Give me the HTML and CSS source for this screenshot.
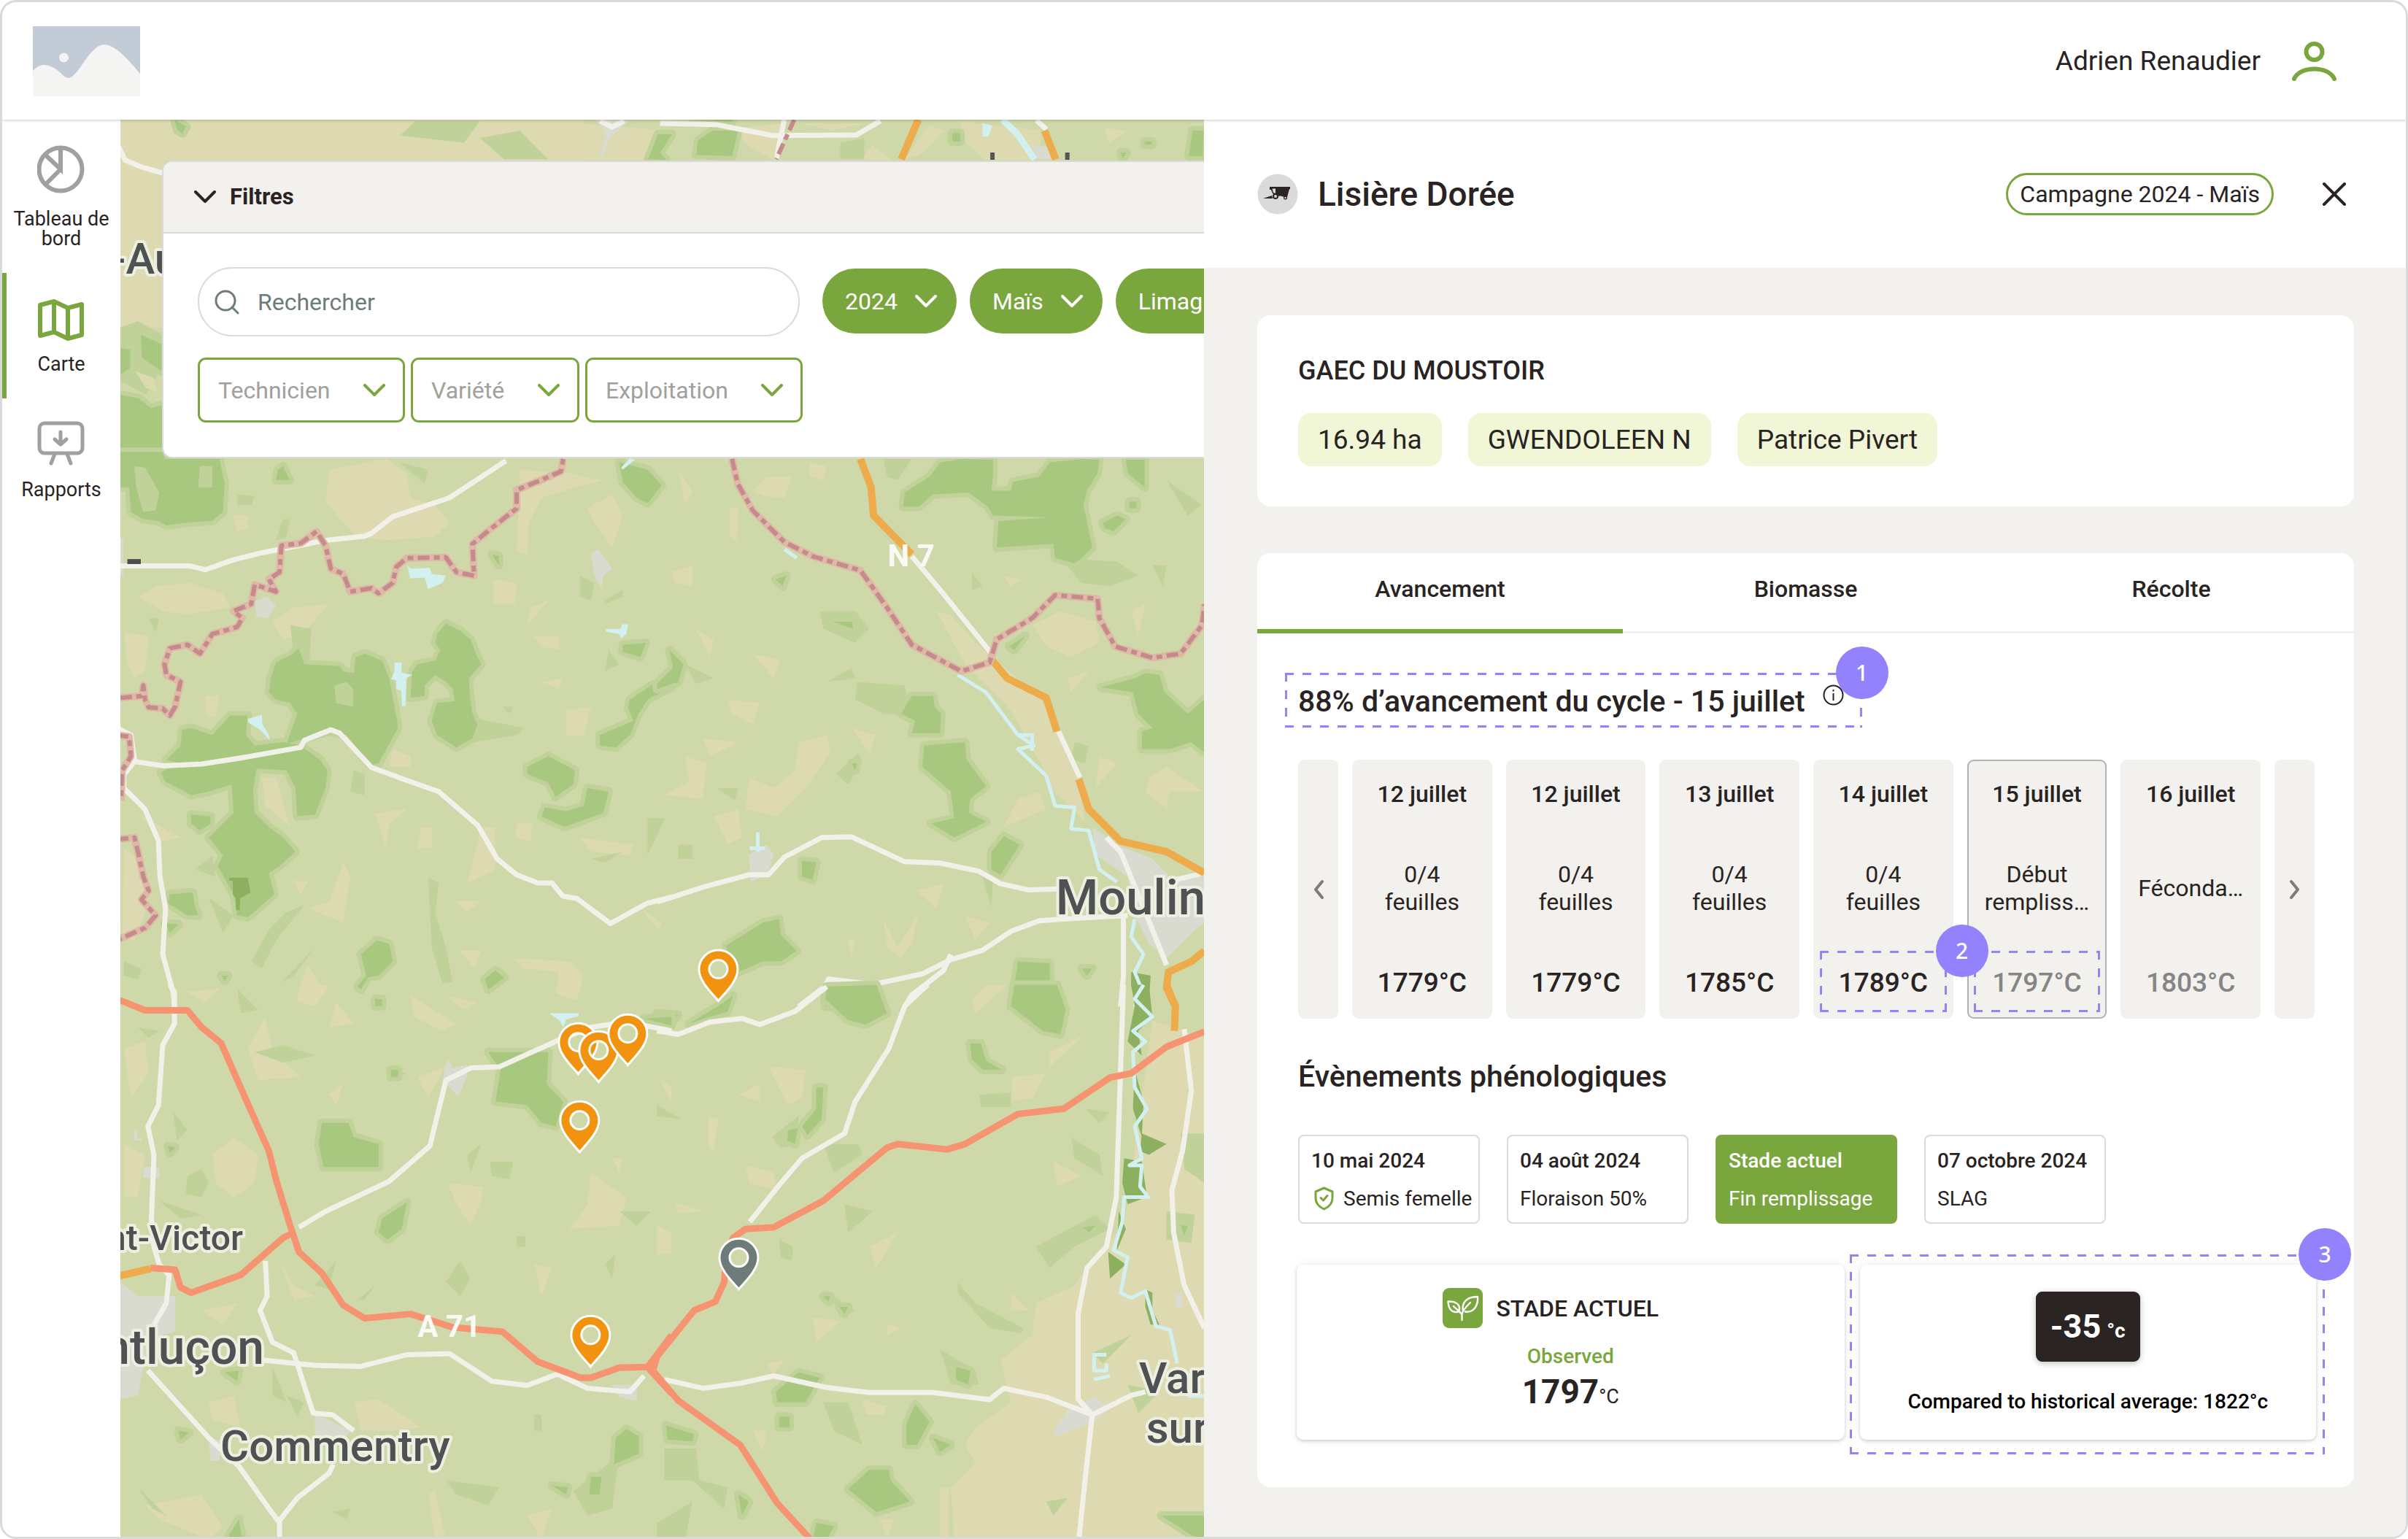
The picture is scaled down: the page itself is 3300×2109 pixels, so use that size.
FILE: index.html
```html
<!DOCTYPE html>
<html lang="fr">
<head>
<meta charset="utf-8">
<title>Carte des parcelles</title>
<link rel="stylesheet" href="styles.css">
</head>
<body>
<div class="app">
  <header class="topbar">
    <svg class="logo" viewBox="0 0 147 96" role="img" aria-label="Logo">
      <rect width="147" height="96" fill="#c3cbd6"/>
      <path fill="#f4f4f2" d="M0 61C8 53 14 52 22 54C34 58 38 65 45 70C52 73 57 67 66 55C78 37 88 25 98 25C114 26 131 46 147 65V96H0Z"/>
      <ellipse cx="42.500" cy="43" rx="6.500" ry="6.500" fill="#f4f4f2"/>
    </svg>
    <div class="user">
      <span>Adrien Renaudier</span>
      <svg width="61" height="54" viewBox="0 0 61 54" fill="none" stroke="#7aa63e" aria-hidden="true">
        <circle cx="30.500" cy="14" r="11" stroke-width="6"/>
        <path d="M3 51C7 42 18 37.500 30.500 37.500S54 42 58 51" stroke-width="6" stroke-linecap="round"/>
      </svg>
    </div>
  </header>

  <div class="layout">
    <nav class="sidebar">
      <a class="nav-item" href="#">
        <svg width="66" height="72" viewBox="0 0 66 72" fill="none" stroke="#a0a09e" stroke-width="6" aria-hidden="true">
          <circle cx="32" cy="33" r="29.500"/><path d="M32 4V33L12 14M32 33L12 53"/>
        </svg>
        <span>Tableau de bord</span>
      </a>
      <a class="nav-item active" href="#">
        <svg width="66" height="72" viewBox="0 0 66 72" fill="none" stroke="#7aa63e" stroke-width="6" stroke-linejoin="round" aria-hidden="true">
          <path d="M4 20L23 15L42 24L61 19V61L42 66L23 57L4 62ZM23 15V57M42 24V66"/>
        </svg>
        <span>Carte</span>
      </a>
      <a class="nav-item" href="#">
        <svg width="66" height="72" viewBox="0 0 66 72" fill="none" stroke="#a0a09e" stroke-width="5" stroke-linecap="round" stroke-linejoin="round" aria-hidden="true">
          <rect x="3" y="10" width="59" height="41" rx="7"/><path d="M32 22V39M24 32L32 39L40 32M24 52L19 65M41 52L46 65"/>
        </svg>
        <span>Rapports</span>
      </a>
    </nav>

    <main class="map">
      <svg class="map-canvas" viewBox="165 165 1485 1941" preserveAspectRatio="xMinYMin slice" aria-label="Carte">
        <defs>
          <symbol id="pin" viewBox="-30 -74 60 78" overflow="visible">
            <path fill-rule="evenodd" stroke="#fff" stroke-width="3" d="M0 0C-6 -8 -26.500 -26 -26.500 -43A26.500 26.500 0 0 1 26.500 -43C26.500 -26 6 -8 0 0ZM0 -56A12.500 12.500 0 0 0 0 -31A12.500 12.500 0 0 0 0 -56Z"/>
          </symbol>
          <path id="limit-west" d="M10 695L70 690L75 660L80 700L90 722L130 725L150 745L165 720L180 650L140 630L135 600L150 555L200 545L235 570L270 515L340 495L355 470L330 450L380 430L390 375L450 395L430 360L460 340L465 265L520 258L565 225L590 265L605 330L640 345L660 395L720 385L740 400L780 370L790 325L820 300L930 298L960 340L1010 350L1005 260L1060 215L1130 160L1130 108L1210 75L1255 55L1262 20M0 1095L50 1090L60 1130L75 1200L90 1240L70 1265L110 1310L80 1345L0 1380M0 800L35 805L40 860L15 900L12 985"/>
          <path id="limit-east" d="M212 20L228 90L270 165L360 255L440 295L575 335L650 440L720 545L860 620L940 595L960 530L1060 470L1125 405L1245 415L1250 470L1295 550L1400 582L1480 570L1540 490L1547 430"/>
        </defs>
        <rect x="165" y="165" width="1485" height="1941" fill="#cfd8a9"/>
        <rect x="165" y="165" width="635" height="56" fill="#ddd9b0"/>
        <rect x="165" y="165" width="60" height="285" fill="#ddd9b0"/>

        <!-- Top band -->
        <g transform="translate(800 160) scale(.5485 .3333)">
          <path class="tan" d="M0 30L200 60L150 180L0 180ZM940 20L1140 60L1140 180L1000 180L950 100ZM380 50L500 30L470 180L400 110ZM540 30L700 30L620 60ZM720 120L770 180L690 180ZM1300 50L1360 60L1310 110ZM860 40L900 60L840 160L800 178Z"/>
          <path class="light" d="M-420 20L-260 20L-300 110L-460 80ZM-260 90L-160 60L-90 178L-200 178ZM640 110L700 90L700 178L640 178Z"/>
          <path class="forest" d="M320 60L385 60L370 165L280 160L285 100ZM185 75L220 75L190 150L205 180L160 178ZM920 70L940 70L940 105L920 105ZM1520 60L1547 60L1545 165L1510 165ZM270 15L370 15L370 24ZM1340 150L1355 150L1345 178ZM1400 105H1418V118H1400Z"/>
          <path class="urban" d="M30 15L110 20L60 100L50 165L40 160L55 70ZM1120 120L1170 130L1180 178H1130Z"/>
          <path class="water" d="M995 30L1020 40L1010 85H995Z"/>
          <path class="river wide" d="M1045 15L1080 70L1125 178"/>
          <path class="road" d="M40 20L70 45L100 20M190 30L330 35L470 80L680 78L740 20M1130 18L1155 55M480 178L500 15"/>
          <path class="border" d="M525 15L480 178"/>
          <path class="orange" d="M835 15L792 178M1150 60L1178 178"/>
          <path class="label-stub" d="M1020 150V180M1207 150V180"/>
        </g>

        <!-- Left strip -->
        <g transform="scale(.3571 .4591)">
          <path class="light" d="M462 980L530 960L622 1000L622 1100L560 1180L462 1140Z"/>
          <path class="forest" d="M540 1000L620 1030L620 1110L545 1070ZM462 1180L530 1190L580 1220L622 1210L622 1400L462 1400ZM462 1040L500 1045L500 1100L462 1120ZM670 360L715 380L700 400L680 390Z"/>
          <path class="tan" d="M520 1110L590 1130L600 1170L560 1160Z"/>
          <path class="road" d="M455 440L480 480L540 500L640 522"/>
        </g>

        <!-- North-west -->
        <g transform="translate(160 620) scale(.4847)">
          <path class="tan" d="M600 50L760 20L820 60L830 130L900 150L940 200L900 240L760 250L680 240L640 200L590 140ZM60 410L110 380L210 370L300 400L320 440L200 460L130 450ZM440 480L500 440L600 430L520 520L470 530ZM20 510L90 520L80 620L50 640L30 600ZM1140 50L1280 60L1370 80L1300 100L1200 130L1165 200L1160 290L1130 280ZM1330 160L1400 120L1430 180L1400 270L1350 200ZM1065 360L1130 370L1125 430L1065 430ZM1180 520L1250 520L1250 560L1200 550ZM780 840L830 860L830 890L770 890ZM1030 1060L1070 1060L1070 1180L990 1220L1000 1180ZM1130 1050L1175 1050L1170 1100L1125 1090ZM1310 1090L1460 1110L1450 1140L1340 1130ZM730 1020L820 1010L770 1050L760 1120ZM540 1290L600 1270L640 1160L660 1200L640 1330ZM970 1410L1030 1410L1010 1460ZM1120 1430L1280 1440L1320 1480L1300 1550L1240 1530L1250 1470L1150 1460ZM20 1120L60 1150L90 1280L50 1380L15 1370ZM1270 730L1340 720L1320 800L1270 800ZM60 1020L180 1090L130 1100ZM510 1530L540 1450L570 1500L600 1510L560 1568L510 1550ZM330 180L370 180L370 220L340 225ZM250 690L290 690L280 750L250 740ZM1200 650L1260 640L1250 670ZM1170 440L1220 420L1160 490ZM860 1060L890 1060L890 1120L850 1120ZM960 1270L1030 1270L990 1300ZM500 1210L540 1215L520 1250ZM1480 1290L1540 1330L1530 1350Z"/>
          <path class="light" d="M470 190L490 190L480 240L450 250ZM880 1200L910 1220L900 1300L930 1400L950 1500L920 1500L890 1400ZM430 1350L480 1300L530 1280L450 1380L410 1460L380 1440ZM1390 560L1420 600L1380 620ZM465 1500L560 1400L500 1480ZM340 120L390 125L380 150L340 150ZM490 490L550 500L545 590L500 570ZM90 470L120 470L110 510ZM1500 1035L1550 1035L1500 1140ZM1310 350L1350 370L1340 420L1310 410ZM1380 420L1430 390L1430 410L1380 430ZM800 30L880 50L870 90ZM1340 1150L1430 1130L1380 1160ZM1090 720L1120 720L1110 740ZM220 1180L270 1140L280 1200ZM260 1260L330 1310L300 1360ZM20 1440L70 1460L60 1490L20 1480ZM670 900L700 910L700 970L660 960ZM1000 750L1150 780L1130 800L1010 820Z"/>
          <path class="forest" d="M10 0L130 0L135 20L290 20L305 90L300 170L270 195L200 200L140 208L115 195L75 190L40 170L35 100L10 100ZM515 555L530 600L630 605L640 620L670 625L675 580L700 570L750 590L770 640L785 720L795 780L740 880L715 885L650 800L600 790L480 825L510 740L490 710L450 700L430 680L435 640L450 595L490 575ZM905 515L930 485L970 505L1000 530L1015 570L1030 600L995 640L998 690L1005 740L1020 770L1005 810L960 835L905 800L890 760L905 710L955 705L950 670L930 650L900 630L870 660L870 690L830 695L835 620L850 600L900 590L915 560L900 540ZM185 785L210 780L270 800L320 745L370 745L365 800L390 830L470 820L520 830L575 870L595 900L590 950L560 1025L510 1030L505 950L480 900L395 895L385 960L390 1020L430 1060L470 1090L505 1130L460 1170L430 1190L445 1250L400 1290L370 1315L340 1310L330 1250L285 1170L300 1140L260 1090L330 1020L325 940L260 960L210 970L135 930L125 905L180 880L140 870L180 830ZM455 50L470 40L488 80L450 80ZM210 1025L265 1030L265 1050L235 1070L210 1050ZM150 1250L215 1245L220 1280L230 1310L200 1310L145 1275ZM690 1420L735 1380L770 1390L780 1440L740 1480L710 1485L690 1520L680 1510L705 1480ZM1420 30L1500 50L1540 95L1500 145L1470 130L1430 85ZM1430 545L1495 540L1480 580L1430 565ZM1568 640L1510 660L1450 700L1445 725L1460 760L1365 800L1365 830L1410 835L1450 800L1475 740L1500 700L1568 665ZM1160 890L1220 860L1295 900L1290 940L1240 975L1220 935L1160 910ZM1330 950L1390 960L1375 1020L1265 1060L1200 1030L1210 1005L1270 1015L1320 1000ZM1060 290L1080 295L1080 320ZM1040 1490L1070 1465L1095 1485L1050 1520ZM135 1330L175 1335L150 1360ZM295 1480L315 1480L305 1495Z"/>
          <path class="light" d="M50 40L80 45L120 115L110 165L75 170L55 100ZM235 40L270 40L270 100L230 100ZM615 660L650 650L668 670L668 720L620 710Z"/>
          <path class="tan" d="M410 920L450 920L490 1060L420 1000Z"/>
          <path class="dark" d="M318 1203H370L378 1245L348 1262V1295H337V1262L328 1250V1212H318Z"/>
          <path class="urban" d="M390 420L425 410L450 435L425 470L395 465ZM1340 290L1360 275L1400 330L1375 350L1370 385L1350 350ZM10 245H18V350H10Z"/>
          <path class="water" d="M820 320L830 330L885 328L890 345L930 350L920 370L880 388L870 355L830 358ZM785 595H805V625L835 630L818 640L816 718H806L804 675L790 670V645L775 643L785 620ZM370 755L410 743L412 770L430 800L432 815L405 785L372 765ZM1382 500L1425 500L1428 487H1445L1440 515L1425 527L1420 515L1382 508ZM1425 45L1450 18L1465 22L1430 50Z"/>
          <path class="road" d="M10 322L205 322L250 333L330 305L410 285L590 250L700 238L720 230L780 183L940 130L1100 25M0 780L40 800L50 870L20 910L20 950L80 1010L118 1100L122 1200L138 1290L130 1420L160 1530L163 1568M10 925L50 875L130 887L240 882L350 865L520 835L530 815L605 785L630 795L720 892L830 932L910 960L1020 1055L1075 1150L1130 1195L1190 1218L1230 1218L1260 1255L1300 1262L1395 1333L1500 1275L1568 1258"/>
          <use href="#limit-west" class="border-bed"/>
          <use href="#limit-west" class="border"/>
          <path d="M30 303H68V317H30Z" fill="#4c4c4c"/>
        </g>

        <!-- North-east -->
        <g transform="translate(900 620) scale(.4847)">
          <path class="tan" d="M270 110L310 70L380 70L360 130L300 125ZM430 30L480 40L470 80L430 70ZM40 340L100 320L100 380L50 370ZM1060 490L1140 450L1240 480L1250 540L1170 580L1100 550ZM1340 450L1380 430L1360 520ZM790 450L830 460L900 540L1080 690L1180 870L1210 1050L1180 1010L1120 960L1090 890L1000 730L870 600ZM200 700L290 710L270 770L210 740ZM400 820L480 800L490 850L420 950L340 1030L250 1010L260 920L330 950L390 900ZM80 860L140 880L130 980L20 970L90 930ZM160 1030L230 1010L240 1090L200 1110ZM1390 920L1440 890L1547 960L1450 960L1440 1010L1380 960ZM640 1320L680 1400L740 1300L720 1390L690 1430L650 1400ZM870 1310L940 1330L900 1380ZM205 160L230 160L225 250L205 240ZM980 350L1030 360L1000 380ZM110 500L160 530L150 580ZM270 570L350 590L330 640ZM130 810L230 820L150 860ZM1160 640L1220 620L1170 680ZM1020 980L1080 960L1100 1010L980 1060ZM550 780L620 800L600 850ZM1250 860L1300 880L1240 950ZM730 1240L810 1220L790 1290ZM540 1380L560 1380L550 1430ZM60 50L100 110L80 150Z"/>
          <path class="light" d="M565 650L700 660L720 750L640 740L560 700ZM460 450L560 450L600 500L560 540L470 500ZM505 910L570 850L580 880L540 940ZM170 950L230 950L220 985ZM640 20L720 20L680 80L650 70ZM890 340L920 380L890 390ZM1140 300L1300 310L1360 350L1280 380L1200 370ZM1400 320L1440 320L1430 380ZM1180 820L1220 830L1210 880L1170 870ZM480 650L550 610L560 640ZM80 600L160 640L110 655ZM60 1110H100V1150H60ZM920 1200L950 1200L945 1290ZM1440 80L1540 150L1500 180Z"/>
          <path class="forest" d="M800 30L860 20L950 22L950 60L945 110L1000 110L1005 85L1080 70L1110 30L1200 20L1250 22L1245 60L1215 110L1205 150L1230 270L1200 300L1180 315L1125 300L1120 260L960 270L965 195L1110 185L950 180L935 155L880 115L780 120L740 155L695 155L700 115L770 70ZM1325 22L1378 22L1378 100L1330 60ZM1260 200L1300 180L1325 190L1290 225L1265 215ZM1255 665L1350 640L1380 625L1420 630L1435 680L1500 740L1547 700L1547 850L1510 820L1450 840L1370 840L1370 790L1400 780L1360 740L1345 680ZM720 690L780 690L785 720L803 740L800 795L720 795L730 760L690 740ZM755 830L870 820L875 870L930 945L885 980L880 1020L930 1045L840 1090L775 1050L840 1035L830 960L750 890ZM945 1130L980 1085L1025 1110L1000 1150L970 1195L945 1180ZM195 1395L300 1330L345 1320L350 1365L395 1410L350 1440L300 1440L230 1470L200 1420ZM410 1155L450 1160L440 1210L410 1200ZM475 1530L500 1500L620 1520L625 1568L475 1568ZM1020 1440L1110 1445L1110 1568L1000 1568ZM35 560L75 600L60 650L0 670L0 655L45 610ZM335 360L365 350L355 380ZM495 480L550 480L555 500ZM550 880L565 880L560 900ZM1200 1460H1230L1215 1480ZM995 550L1040 520L1010 560ZM1335 140H1355V160H1335Z"/>
          <path class="dark" d="M1340 1470L1395 1480L1390 1560L1370 1560L1340 1510Z"/>
          <path class="urban" d="M1230 1060L1300 1110L1400 1150L1450 1200L1547 1200L1547 1330L1500 1370L1440 1430L1390 1390L1350 1310L1330 1200L1240 1140ZM260 1140L310 1110L330 1140L310 1195L265 1215Z"/>
          <path class="river" d="M850 630L930 680L1020 800L1065 830L1020 840L1100 915L1125 1000L1180 1005L1170 1065L1220 1070L1250 1180L1300 1215M1350 1320L1340 1370L1375 1420L1350 1470L1370 1520L1350 1568M285 1075V1130M262 1120H305M360 275L395 300M1020 800L1060 800L1060 845"/>
          <path class="road" d="M0 1272L130 1230L260 1195L315 1195L360 1145L465 1090L550 1088L700 1158L800 1162L910 1185L970 1220L1050 1238L1130 1235M400 1568L475 1510L485 1490L610 1505L750 1475L830 1435L920 1408L1000 1355L1080 1325L1180 1318L1330 1310M700 1568L720 1535L810 1465L830 1420M1318 1310L1318 1480L1310 1568M720 295L800 390L945 570M1135 790L1195 920M1270 1090L1310 1130L1380 1300L1440 1450M1440 1215L1547 1190"/>
          <path class="orange" d="M575 20L605 100L612 180L720 290M948 590L990 640L1100 695L1130 790M1192 925L1220 1010L1310 1100L1440 1130L1547 1190M1547 1410L1510 1440L1445 1470L1440 1515L1465 1568"/>
          <use href="#limit-east" class="border-bed"/>
          <use href="#limit-east" class="border"/>
        </g>

        <!-- South-east -->
        <g transform="translate(900 1350) scale(.4847)">
          <path class="tan" d="M1070 900L1180 850L1230 770L1320 680L1400 100L1547 150L1547 1568L840 1568L830 1420L900 1350L870 1300L900 1250L1000 1180L970 1060L1060 990ZM315 230L420 240L410 320L370 340ZM1005 260L1100 250L1060 320L1000 330ZM1120 500L1200 540L1130 570ZM600 740L680 700L620 800ZM440 940L520 950L450 1010ZM230 310L290 280L290 330ZM145 370L175 380L160 470L145 460ZM250 510L330 530L340 580L260 560ZM0 680L40 700L40 760L0 760ZM50 615L130 640L60 645ZM580 1170L650 1190L640 1215L590 1215ZM650 960L690 970L650 990ZM1000 870L1050 920L1000 920ZM270 1260L310 1260L300 1320ZM630 1510L670 1510L650 1568ZM800 1420H825V1568H800ZM890 40L930 0L990 0L900 80ZM1110 190L1210 140L1110 230ZM310 1070L360 1060L330 1100Z"/>
          <path class="light" d="M850 840L900 900L1035 970L1030 985L940 970L850 870ZM910 310L1000 305L1000 345L915 345ZM1170 430L1250 480L1260 540L1180 490ZM530 620L610 640L540 700ZM1070 740L1240 650L1280 690L1180 740L1110 800ZM800 1030L900 1090L910 1130L830 1130ZM1330 1130L1420 1150L1360 1210ZM345 720L385 740L380 780L350 770ZM325 430L400 370L400 450L350 460ZM470 450L570 450L580 480L500 530ZM20 1310L110 1310L120 1400L200 1420L190 1480L100 1400L20 1400ZM470 1180L540 1180L580 1300L500 1260ZM1440 640L1520 650L1510 730L1440 720ZM1230 1040L1340 990L1260 1070ZM0 340L70 380L0 370ZM0 1520L100 1460L80 1568L0 1568ZM1100 1460L1160 1450L1120 1500ZM470 860L560 920L530 940ZM1210 350L1280 360L1250 390ZM1480 420L1547 420L1547 560L1490 520Z"/>
          <path class="forest" d="M475 40L480 5L620 0L650 80L590 112L540 100ZM1010 0L1130 0L1155 70L1140 140L1090 130L1000 60ZM885 165L915 165L930 215L975 240L920 240L890 210ZM0 80L60 85L30 120L0 115ZM90 110L180 55L215 30L200 75L120 100ZM600 1370L655 1370L660 1400L715 1460L620 1490L540 1425ZM705 1240L730 1185L770 1235L735 1300L705 1300ZM335 1150L400 1095L460 1110L420 1180L340 1180ZM25 1245L105 1270L100 1290L30 1285ZM1425 1500L1547 1500L1547 1568L1510 1555ZM845 1080L885 1090L880 1130L845 1115ZM230 1440L260 1460L240 1500ZM370 410L398 405L390 450L368 440ZM450 290L470 290L465 380L425 425L410 400L450 350ZM780 1280L830 1300L800 1320ZM1205 685L1240 680L1220 700ZM470 880L490 880L485 895ZM515 910L540 910L530 930ZM450 1520L500 1530L480 1568L440 1568ZM345 1220H375V1250H345ZM1480 680L1500 680L1490 710Z"/>
          <path class="dark" d="M1340 0L1390 0L1400 90L1360 130L1370 200L1330 160L1350 60ZM1350 240L1375 330L1370 430L1345 350ZM1370 420L1440 450L1390 480L1365 470ZM1320 490L1370 500L1385 600L1330 620L1315 560ZM1305 640L1325 690L1300 750ZM1275 755L1325 790L1280 830ZM1380 860L1400 870V920L1420 960L1395 960L1380 910Z"/>
          <path class="urban" d="M1120 1260L1170 1190L1240 1165L1280 1200L1220 1240L1130 1275ZM1465 870H1485V910H1465Z"/>
          <path class="river" d="M1375 0L1350 40L1400 90L1345 130L1380 160L1345 190L1350 290L1385 350L1350 400L1370 490L1335 510L1370 510L1365 570L1388 600L1320 600L1315 670L1290 750L1330 770L1310 870L1340 885L1380 865L1410 965L1450 975L1470 1070M1230 1045H1270M1235 1045V1090H1270V1070M1235 1115L1280 1105M1500 1162H1547"/>
          <path class="road" d="M0 130L60 140L150 105L240 95L290 112L390 75L480 5M1318 0L1308 300L1298 600L1270 740L1215 800L1190 930L1190 1170L1230 1215L1215 1350L1192 1568M1490 125L1510 300L1485 470L1455 580L1460 700L1490 850L1547 970M765 0L700 60L655 180L560 330L530 420L410 490L350 560L262 670M20 1115L130 1140L240 1125L330 1105L480 1138L600 1152L780 1152L940 1172L980 1140L1100 1165L1230 1215L1340 1160L1380 1150"/>
          <path class="orange" d="M1440 0L1465 60L1462 130"/>
          <path class="red" d="M-10 1085L0 1050L105 920L165 895L190 840L195 760L215 715L250 690L330 685L470 610L650 460L680 450L820 465L870 450L1020 365L1150 350L1280 262L1340 250L1440 175L1547 132M-10 1092L60 1175L235 1300L340 1465L435 1568"/>
        </g>

        <!-- South-west -->
        <g transform="translate(160 1350) scale(.4847)">
          <path class="tan" d="M270 480L330 430L400 480L390 560L330 600L280 560ZM370 180L420 90L440 190L520 260L400 270ZM670 1180L740 1170L860 1250L780 1260L690 1260ZM80 1470L240 1440L300 1530L260 1568L120 1510ZM935 560L1035 570L1030 610L1000 680L960 620ZM1340 530L1440 600L1420 680L1280 690L1330 620ZM1180 790L1230 800L1200 880ZM460 780L500 850L560 880L500 890ZM200 20L290 10L250 50ZM850 260L930 230L880 320ZM600 310L640 280L620 340ZM20 180L80 160L90 250L40 320ZM20 450L80 480L60 600L20 600ZM260 1180L330 1160L350 1250L270 1230ZM880 1440L900 1430L930 1568L900 1568ZM1400 490L1430 490L1420 530ZM830 30L960 110L920 130L840 90ZM1160 1500L1230 1480L1200 1568ZM930 30L1020 50L980 70ZM240 920L340 900L300 960ZM1530 260L1568 290L1568 330ZM620 50L670 110L600 120Z"/>
          <path class="light" d="M200 540L240 520L260 560L240 600L195 590ZM160 360L200 410L170 440ZM930 840L970 780L1000 830L970 880ZM1055 500L1120 500L1110 550L1060 540ZM120 610L240 650L180 660ZM680 890L730 850L700 890ZM390 190L470 170L560 200L470 220ZM930 1400L1080 1420L1050 1470L960 1440ZM1180 1215H1200V1260H1180ZM60 120L120 130L90 150ZM340 10L400 70L350 80ZM60 1420L140 1500L100 1480ZM480 1160L530 1180L510 1220ZM1130 710H1155V740H1130ZM1380 790L1410 760L1400 830ZM440 1080L480 1180L440 1160ZM610 1490L660 1480L650 1510ZM760 230L820 250L780 270ZM990 480L1030 450L1000 530ZM1420 640L1510 640L1470 680ZM560 850L620 780L600 860ZM1290 1430L1420 1330L1400 1480L1330 1500Z"/>
          <path class="forest" d="M580 390L655 390L670 430L740 450L740 515L585 515L570 450ZM1050 190L1220 190L1215 280L1262 330L1240 400L1200 390L1160 340L1070 330L1085 240ZM750 660L820 615L805 690L765 720L740 700ZM1410 1280L1440 1255L1475 1275L1475 1325L1405 1355ZM1340 1390L1370 1390L1365 1440L1335 1440ZM310 1568L345 1510L355 1568ZM1230 1415L1275 1420L1270 1440ZM1490 95L1568 90L1568 115ZM145 455L165 460L150 475ZM175 1260L205 1265L180 1285ZM305 1095L345 1090L340 1120ZM730 40H750V60H730ZM775 240H795V260H775Z"/>
          <path class="urban" d="M10 840L60 880L165 880L165 980L90 1000L60 1160L10 1170ZM560 1210L660 1260L640 1290L560 1280ZM920 270L935 210L950 235L990 225V260L965 315ZM260 1280L300 1290L290 1345L265 1345ZM1400 1130H1470V1175L1420 1165ZM50 410H58V435H70V440H50ZM75 515H120V545H75Z"/>
          <path class="water" d="M1222 80H1305V88L1270 98L1262 120L1250 100Z"/>
          <path class="road" d="M150 0L163 20L163 110L130 170L118 340L88 400L105 480L98 660L105 740L120 790L148 820L140 900L105 960M88 1090L260 1280L345 1360L430 1480L460 1520L460 1568M455 1520L510 1450L600 1380L612 1355M515 685L590 640L770 555L885 455L930 270L1000 235L1080 232L1240 160L1340 120L1440 105L1568 130M420 780L425 880L405 920L440 1010L500 1040L555 1210L610 1215L670 1260M410 1060L560 1075L690 1078L820 1045L940 1042L1060 1120L1160 1132L1245 1100L1330 1140L1450 1150L1490 1105"/>
          <path class="red" d="M0 40L80 72L200 72L240 120L295 165L350 290L430 470L450 550L490 680L515 755L580 815L640 905L700 942L830 930L950 968L1090 980L1190 1065L1310 1110L1340 1110L1420 1082L1500 1080L1568 990M1500 1080L1568 1155M500 700L470 715L350 820L210 870L180 855L165 805L95 800"/>
          <path class="orange" d="M0 824L95 802"/>
        </g>

        <g class="place">
          <text x="152" y="376" font-size="60">-Au</text>
          <text x="1446" y="1253" font-size="67">Moulin</text>
          <text x="333" y="1713" font-size="48" text-anchor="end">nt-Victor</text>
          <text x="362" y="1869" font-size="66" text-anchor="end">ntluçon</text>
          <text x="302" y="2002" font-size="60">Commentry</text>
          <text x="1560" y="1909" font-size="60">Var</text>
          <text x="1570" y="1977" font-size="60">sur</text>
        </g>
        <g class="road-name">
          <text x="1216" y="777">N 7</text>
          <text x="572" y="1832">A 71</text>
        </g>

        <g fill="#f2930f">
          <use href="#pin" x="954" y="1298" width="60" height="78"/>
          <use href="#pin" x="762" y="1398" width="60" height="78"/>
          <use href="#pin" x="790" y="1409" width="60" height="78"/>
          <use href="#pin" x="830" y="1386" width="60" height="78"/>
          <use href="#pin" x="764" y="1505" width="60" height="78"/>
          <use href="#pin" x="779" y="1799" width="60" height="78"/>
        </g>
        <use href="#pin" x="982" y="1693" width="60" height="78" fill="#6d7b79"/>
      </svg>

      <section class="filters">
        <button class="filters-head" type="button">
          <svg class="chevron" viewBox="0 0 30 18"><path d="M2 2L15 15L28 2"/></svg>
          <span>Filtres</span>
        </button>
        <div class="filters-body">
          <div class="row">
            <label class="search">
              <svg width="34" height="34" viewBox="0 0 34 34" fill="none" stroke="#6d7b79" stroke-width="3" stroke-linecap="round" aria-hidden="true"><circle cx="15" cy="15" r="13"/><path d="M24 24L32 32"/></svg>
              <input type="text" placeholder="Rechercher" aria-label="Rechercher">
            </label>
            <div class="chips">
              <button class="chip" type="button">2024<svg class="chevron" viewBox="0 0 30 18"><path d="M2 2L15 15L28 2"/></svg></button>
              <button class="chip" type="button">Maïs<svg class="chevron" viewBox="0 0 30 18"><path d="M2 2L15 15L28 2"/></svg></button>
              <button class="chip" type="button">Limagne<svg class="chevron" viewBox="0 0 30 18"><path d="M2 2L15 15L28 2"/></svg></button>
            </div>
          </div>
          <div class="selects">
            <div class="select"><select aria-label="Technicien"><option>Technicien</option></select><svg class="chevron" viewBox="0 0 30 18"><path d="M2 2L15 15L28 2"/></svg></div>
            <div class="select"><select aria-label="Variété"><option>Variété</option></select><svg class="chevron" viewBox="0 0 30 18"><path d="M2 2L15 15L28 2"/></svg></div>
            <div class="select"><select aria-label="Exploitation"><option>Exploitation</option></select><svg class="chevron" viewBox="0 0 30 18"><path d="M2 2L15 15L28 2"/></svg></div>
          </div>
        </div>
      </section>
    </main>

    <aside class="detail">
      <header class="detail-head">
        <svg width="56" height="56" viewBox="0 0 56 56" aria-hidden="true">
          <circle cx="28" cy="28" r="27.500" fill="#dadada"/>
          <g fill="#2a2423"><path d="M17 18H45V21H44L41 32H37L32 30.500L26 31L21 27L19 22H17ZM8 34L20 30L21 34Z"/><circle cx="25" cy="31" r="4"/><circle cx="38.500" cy="33" r="2.500"/></g>
          <path d="M20.500 20.500H25V27L22 26Z" fill="#dadada"/>
          <circle cx="25" cy="31" r="2" fill="#dadada"/><circle cx="38.500" cy="33" r="1.200" fill="#dadada"/>
        </svg>
        <h1>Lisière Dorée</h1>
        <span class="campaign">Campagne 2024 - Maïs</span>
        <button class="close" type="button" aria-label="Fermer">
          <svg width="34" height="34" viewBox="0 0 34 34" stroke="#292323" stroke-width="4" stroke-linecap="round"><path d="M3 3L31 31M31 3L3 31"/></svg>
        </button>
      </header>

      <div class="detail-body">
        <section class="card farm">
          <h2>GAEC DU MOUSTOIR</h2>
          <div class="tags"><span>16.94 ha</span><span>GWENDOLEEN N</span><span>Patrice Pivert</span></div>
        </section>

        <section class="card">
          <div class="tabs" role="tablist">
            <button type="button" role="tab" aria-selected="true">Avancement</button>
            <button type="button" role="tab" aria-selected="false">Biomasse</button>
            <button type="button" role="tab" aria-selected="false">Récolte</button>
          </div>
          <div class="card-body">
            <div class="progress note">
              <h2>88% d’avancement du cycle - 15 juillet</h2>
              <svg width="29" height="29" viewBox="0 0 29 29" fill="none" stroke="#292323" stroke-width="2" aria-hidden="true"><circle cx="14.500" cy="14.500" r="13"/><path d="M14.500 12V22M14.500 7V9.500"/></svg>
              <span class="badge">1</span>
            </div>

            <div class="days">
              <button class="step" type="button" aria-label="Précédent"><svg width="16" height="28" viewBox="0 0 16 28"><path d="M13 3L4 14L13 25"/></svg></button>
              <article class="day"><h3>12 juillet</h3><p>0/4<br>feuilles</p><div class="temp">1779°C</div></article>
              <article class="day"><h3>12 juillet</h3><p>0/4<br>feuilles</p><div class="temp">1779°C</div></article>
              <article class="day"><h3>13 juillet</h3><p>0/4<br>feuilles</p><div class="temp">1785°C</div></article>
              <article class="day"><h3>14 juillet</h3><p>0/4<br>feuilles</p><div class="temp note">1789°C<span class="badge between">2</span></div></article>
              <article class="day current"><h3>15 juillet</h3><p>Début<br>rempliss…</p><div class="temp note forecast">1797°C</div></article>
              <article class="day"><h3>16 juillet</h3><p>Féconda…</p><div class="temp forecast">1803°C</div></article>
              <button class="step" type="button" aria-label="Suivant"><svg width="16" height="28" viewBox="0 0 16 28"><path d="M3 3L12 14L3 25"/></svg></button>
            </div>

            <h2 class="section-title">Évènements phénologiques</h2>
            <div class="events">
              <div class="event"><b>10 mai 2024</b><span class="checked"><svg width="27" height="33" viewBox="0 0 27 33" fill="none" stroke="#7aa63e" stroke-width="3" stroke-linejoin="round" stroke-linecap="round" aria-hidden="true"><path d="M13.500 2L25 7V16C25 23 20 28 13.500 31C7 28 2 23 2 16V7ZM9 15.500L12.500 19L18 12.500"/></svg>Semis femelle</span></div>
              <div class="event"><b>04 août 2024</b><span>Floraison 50%</span></div>
              <div class="event now"><b>Stade actuel</b><span>Fin remplissage</span></div>
              <div class="event"><b>07 octobre 2024</b><span>SLAG</span></div>
            </div>

            <div class="stages">
              <div class="stage current-stage">
                <div class="stage-title">
                  <svg width="55" height="55" viewBox="0 0 55 55" fill="none" stroke="#fff" stroke-width="2.400" stroke-linecap="round" stroke-linejoin="round" aria-hidden="true">
                    <rect width="55" height="55" rx="9" fill="#7aa63e" stroke="none"/>
                    <path d="M26.500 44V36C26.500 33 30 28 38 20M28 31C26 20 33 12 48 12C49 25 42 34 31 32.500M26.500 37C25 33 20 30 15 25M22 32.500C12 35 8 28 7.500 18.500C17 18 24 22 23 30"/>
                  </svg>
                  <span>STADE ACTUEL</span>
                </div>
                <div class="observed">Observed</div>
                <div class="value">1797<small>°C</small></div>
              </div>
              <div class="compare">
                <div class="stage">
                  <div class="delta">-35<small>°c</small></div>
                  <p>Compared to historical average: 1822°c</p>
                </div>
                <div class="outline note"><span class="badge">3</span></div>
              </div>
            </div>
          </div>
        </section>
      </div>
    </aside>
  </div>
</div>
</body>
</html>
```
FILE: styles.css
```css
:root {
  --green: #7aa63e;
  --ink: #292323;
  --line: #dadada;
  --sand: #f2f1ed;
  --violet: #9282fc;
}

* { box-sizing: border-box; }

body {
  margin: 0;
  background: #fff;
  color: var(--ink);
  font-family: Roboto, "Liberation Sans", sans-serif;
  font-size: 32px;
  line-height: 38px;
}

h1, h2, h3, p { margin: 0; font-weight: 500; }

button, input, select {
  font: inherit;
  color: inherit;
  margin: 0;
  padding: 0;
  border: 0;
  background: none;
}

svg { flex: none; display: block; }

.app {
  display: flex;
  flex-direction: column;
  min-height: 100vh;
  border: 3px solid var(--line);
  border-radius: 22px;
  overflow: hidden;
}

/* Top bar */
.topbar {
  display: flex;
  align-items: center;
  justify-content: space-between;
  height: 161px;
  padding: 0 95px 0 42px;
  position: relative;
  z-index: 2;
  box-shadow: 0 1px 4px rgba(0, 0, 0, .2);
}
.logo { width: 147px; height: 96px; }
.user {
  display: flex;
  align-items: center;
  gap: 43px;
  font-size: 37px;
}

.layout { flex: 1; display: flex; }

/* Navigation */
.sidebar {
  flex: none;
  width: 162px;
  padding-top: 11px;
}
.nav-item {
  display: flex;
  flex-direction: column;
  align-items: center;
  gap: 16px;
  padding: 24px 10px 33px;
  color: var(--ink);
  font-size: 27px;
  line-height: 27px;
  text-align: center;
  text-decoration: none;
}
.nav-item.active { box-shadow: inset 6px 0 var(--green); }

/* Map */
.map {
  flex: 1485 1 0;
  min-width: 0;
  position: relative;
  overflow: hidden;
  background: #cfd8a9;
}
.map-canvas {
  position: absolute;
  inset: 0;
  width: 100%;
  height: 100%;
}
.map-canvas path { vector-effect: non-scaling-stroke; }
.tan { fill: #ddd9b0; }
.light { fill: #c0d29a; }
.forest { fill: #a8c880; stroke: #c0d29a; stroke-width: 12; stroke-linejoin: round; paint-order: stroke; }
.dark { fill: #8cb060; }
.urban { fill: #dadbd0; }
.water { fill: #d3f0f0; }
.road, .red, .orange, .river, .border, .border-bed, .label-stub { fill: none; stroke-linejoin: round; }
.road { stroke: #f1f1e9; stroke-width: 7; }
.red { stroke: #f69472; stroke-width: 9; }
.orange { stroke: #edab4c; stroke-width: 10; }
.river { stroke: #d3f0f0; stroke-width: 5; }
.river.wide { stroke-width: 9; }
.border { stroke: #c48a8c; stroke-width: 6; stroke-dasharray: 16 6 8 6; }
.border-bed { stroke: #deb9a6; stroke-width: 10; }
.label-stub { stroke: #555; stroke-width: 6; }
.place {
  fill: #4f5252;
  font-weight: 500;
  stroke: #edefe0;
  stroke-width: 8px;
  stroke-linejoin: round;
  paint-order: stroke;
}
.road-name { fill: #fafaf4; font-size: 42px; font-weight: 700; }

/* Filters */
.chevron {
  width: 30px;
  height: 18px;
  fill: none;
  stroke: currentColor;
  stroke-width: 4;
  stroke-linecap: round;
  stroke-linejoin: round;
}
.filters {
  position: relative;
  margin: 56px 0 0 57px;
  border: 2px solid var(--line);
  border-right: 0;
  border-radius: 14px 0 0 14px;
  background: #fff;
  overflow: hidden;
}
.filters-head {
  display: flex;
  align-items: center;
  gap: 19px;
  width: 100%;
  height: 98px;
  padding-left: 42px;
  border-bottom: 2px solid var(--line);
  background: var(--sand);
  font-size: 31px;
  font-weight: 700;
}
.filters-body { padding: 46px 0 47px 47px; }
.row { display: flex; align-items: flex-start; gap: 31px; }
.search {
  flex: none;
  display: flex;
  align-items: center;
  gap: 25px;
  width: 825px;
  height: 95px;
  padding: 0 21px;
  border: 2px solid var(--line);
  border-radius: 48px;
}
.search input { flex: 1; min-width: 0; outline: 0; }
.search input::placeholder { color: #6d7b79; opacity: 1; }
.chips { display: flex; gap: 18px; padding-top: 2px; }
.chip {
  flex: none;
  display: flex;
  align-items: center;
  gap: 24px;
  height: 89px;
  padding: 0 27px 0 31px;
  border-radius: 45px;
  background: var(--green);
  color: #fff;
}
.selects { display: flex; gap: 8px; margin-top: 29px; }
.select { display: grid; align-items: center; color: var(--green); }
.select select {
  grid-area: 1 / 1;
  appearance: none;
  height: 89px;
  padding: 0 99px 0 25px;
  border: 3px solid var(--green);
  border-radius: 11px;
  color: #a0a09c;
}
.select .chevron {
  grid-area: 1 / 1;
  justify-self: end;
  margin-right: 27px;
  pointer-events: none;
}

/* Detail panel */
.detail {
  flex: 1647 1 0;
  min-width: 0;
  display: flex;
  flex-direction: column;
}
.detail-head {
  display: flex;
  align-items: center;
  height: 203px;
  padding: 0 81px 0 73px;
}
.detail-head h1 {
  margin: 0 auto 0 27px;
  font-size: 46px;
  line-height: 54px;
}
.campaign {
  padding: 7px 16px;
  border: 3px solid var(--green);
  border-radius: 30px;
}
.close { margin-left: 66px; }
.detail-body {
  flex: 1;
  display: flex;
  flex-direction: column;
  gap: 64px;
  padding: 65px 71px 66px 73px;
  background: var(--sand);
}
.card { border-radius: 18px; background: #fff; }
.farm { padding: 54px 56px 55px; }
.farm h2 { font-size: 36px; line-height: 44px; }
.tags {
  display: flex;
  gap: 36px;
  margin-top: 36px;
  font-size: 37px;
  line-height: 73px;
}
.tags span {
  padding: 0 27px;
  border-radius: 18px;
  background: #f0f6d6;
}

.tabs {
  display: grid;
  grid-template-columns: repeat(3, 1fr);
  box-shadow: inset 0 -3px var(--sand);
}
.tabs button {
  padding: 30px 0 36px;
  border-bottom: 6px solid transparent;
  font-weight: 500;
}
.tabs [aria-selected="true"] { border-color: var(--green); }
.card-body { padding: 54px 54px 65px 56px; }

/* Dashed annotation frames */
.note {
  position: relative;
  background:
    repeating-linear-gradient(90deg, var(--violet) 0 12px, transparent 12px 24px) 0 0 / 100% 3px,
    repeating-linear-gradient(90deg, var(--violet) 0 12px, transparent 12px 24px) 0 100% / 100% 3px,
    repeating-linear-gradient(var(--violet) 0 12px, transparent 12px 24px) 0 0 / 3px 100%,
    repeating-linear-gradient(var(--violet) 0 12px, transparent 12px 24px) 100% 0 / 3px 100%;
  background-repeat: no-repeat;
}
.badge {
  position: absolute;
  top: -36px;
  right: -36px;
  z-index: 1;
  width: 72px;
  height: 72px;
  border-radius: 50%;
  background: var(--violet);
  color: #fff;
  font: 500 30px/72px "Noto Sans", sans-serif;
  text-align: center;
}
.badge.between { right: -57px; }

.progress {
  display: flex;
  align-items: center;
  gap: 24px;
  width: max-content;
  height: 75px;
  margin-left: -18px;
  padding: 3px 25px 0 18px;
}
.progress h2, .section-title { font-size: 41px; line-height: 50px; }
.progress svg { align-self: flex-start; margin-top: 13px; }

.days {
  display: grid;
  grid-template-columns: 55px repeat(6, 1fr) 55px;
  gap: 19px;
  height: 355px;
  margin-top: 44px;
}
.step {
  display: grid;
  place-items: center;
  border-radius: 9px;
  background: var(--sand);
}
.step svg { fill: none; stroke: #7d7b7b; stroke-width: 4; stroke-linecap: round; stroke-linejoin: round; }
.day {
  display: flex;
  flex-direction: column;
  min-width: 0;
  padding: 28px 9px 9px;
  border-radius: 9px;
  background: var(--sand);
  text-align: center;
}
.day.current { box-shadow: inset 0 0 0 2px #b3b2b0; }
.day h3 { font-size: 32px; padding-bottom: 24px; }
.day p { flex: 1; display: grid; align-content: center; font-weight: 400; }
.temp { padding-top: 4px; font-size: 37px; font-weight: 500; line-height: 80px; }
.forecast { color: #868484; }

.section-title { margin-top: 54px; }
.events {
  display: flex;
  gap: 37px;
  margin-top: 55px;
  font-size: 28px;
  line-height: 33px;
}
.event {
  display: flex;
  flex-direction: column;
  gap: 19px;
  width: 249px;
  padding: 17px 0 16px 16px;
  border: 2px solid var(--line);
  border-radius: 8px;
  white-space: nowrap;
}
.event b { font-weight: 500; }
.event.now { border-color: var(--green); background: var(--green); color: #fff; }
.checked { display: flex; gap: 13px; padding-left: 4px; }

.stages {
  display: flex;
  gap: 21px;
  margin: 56px -2px 0;
}
.stage {
  display: flex;
  flex-direction: column;
  align-items: center;
  height: 240px;
  border-radius: 9px;
  background: #fff;
  box-shadow: 0 2px 4px rgba(0, 0, 0, .16), 0 0 14px rgba(0, 0, 0, .07);
}
.current-stage { flex: 6; padding-top: 32px; }
.stage-title {
  display: flex;
  align-items: center;
  gap: 18px;
  padding-right: 54px;
  font-weight: 500;
}
.observed {
  margin: 22px 0 5px;
  color: var(--green);
  font-size: 28px;
  font-weight: 500;
  line-height: 33px;
}
.value {
  font-size: 46px;
  font-weight: 700;
  line-height: 54px;
}
.value small { font-size: 27px; font-weight: 400; line-height: 27px; }
.compare { flex: 5; position: relative; }
.compare .stage { padding-top: 37px; }
.delta {
  padding: 0 20px;
  border-radius: 9px;
  background: #2a2423;
  color: #fff;
  font-size: 45px;
  font-weight: 700;
  line-height: 96px;
  box-shadow: 0 2px 8px rgba(0, 0, 0, .25);
}
.delta small { margin-left: 8px; font-size: 28px; line-height: 28px; }
.compare p {
  margin-top: 38px;
  color: #000;
  font-size: 28px;
  line-height: 33px;
}
.outline { position: absolute; inset: -14px -12px -20px -14px; }
```
